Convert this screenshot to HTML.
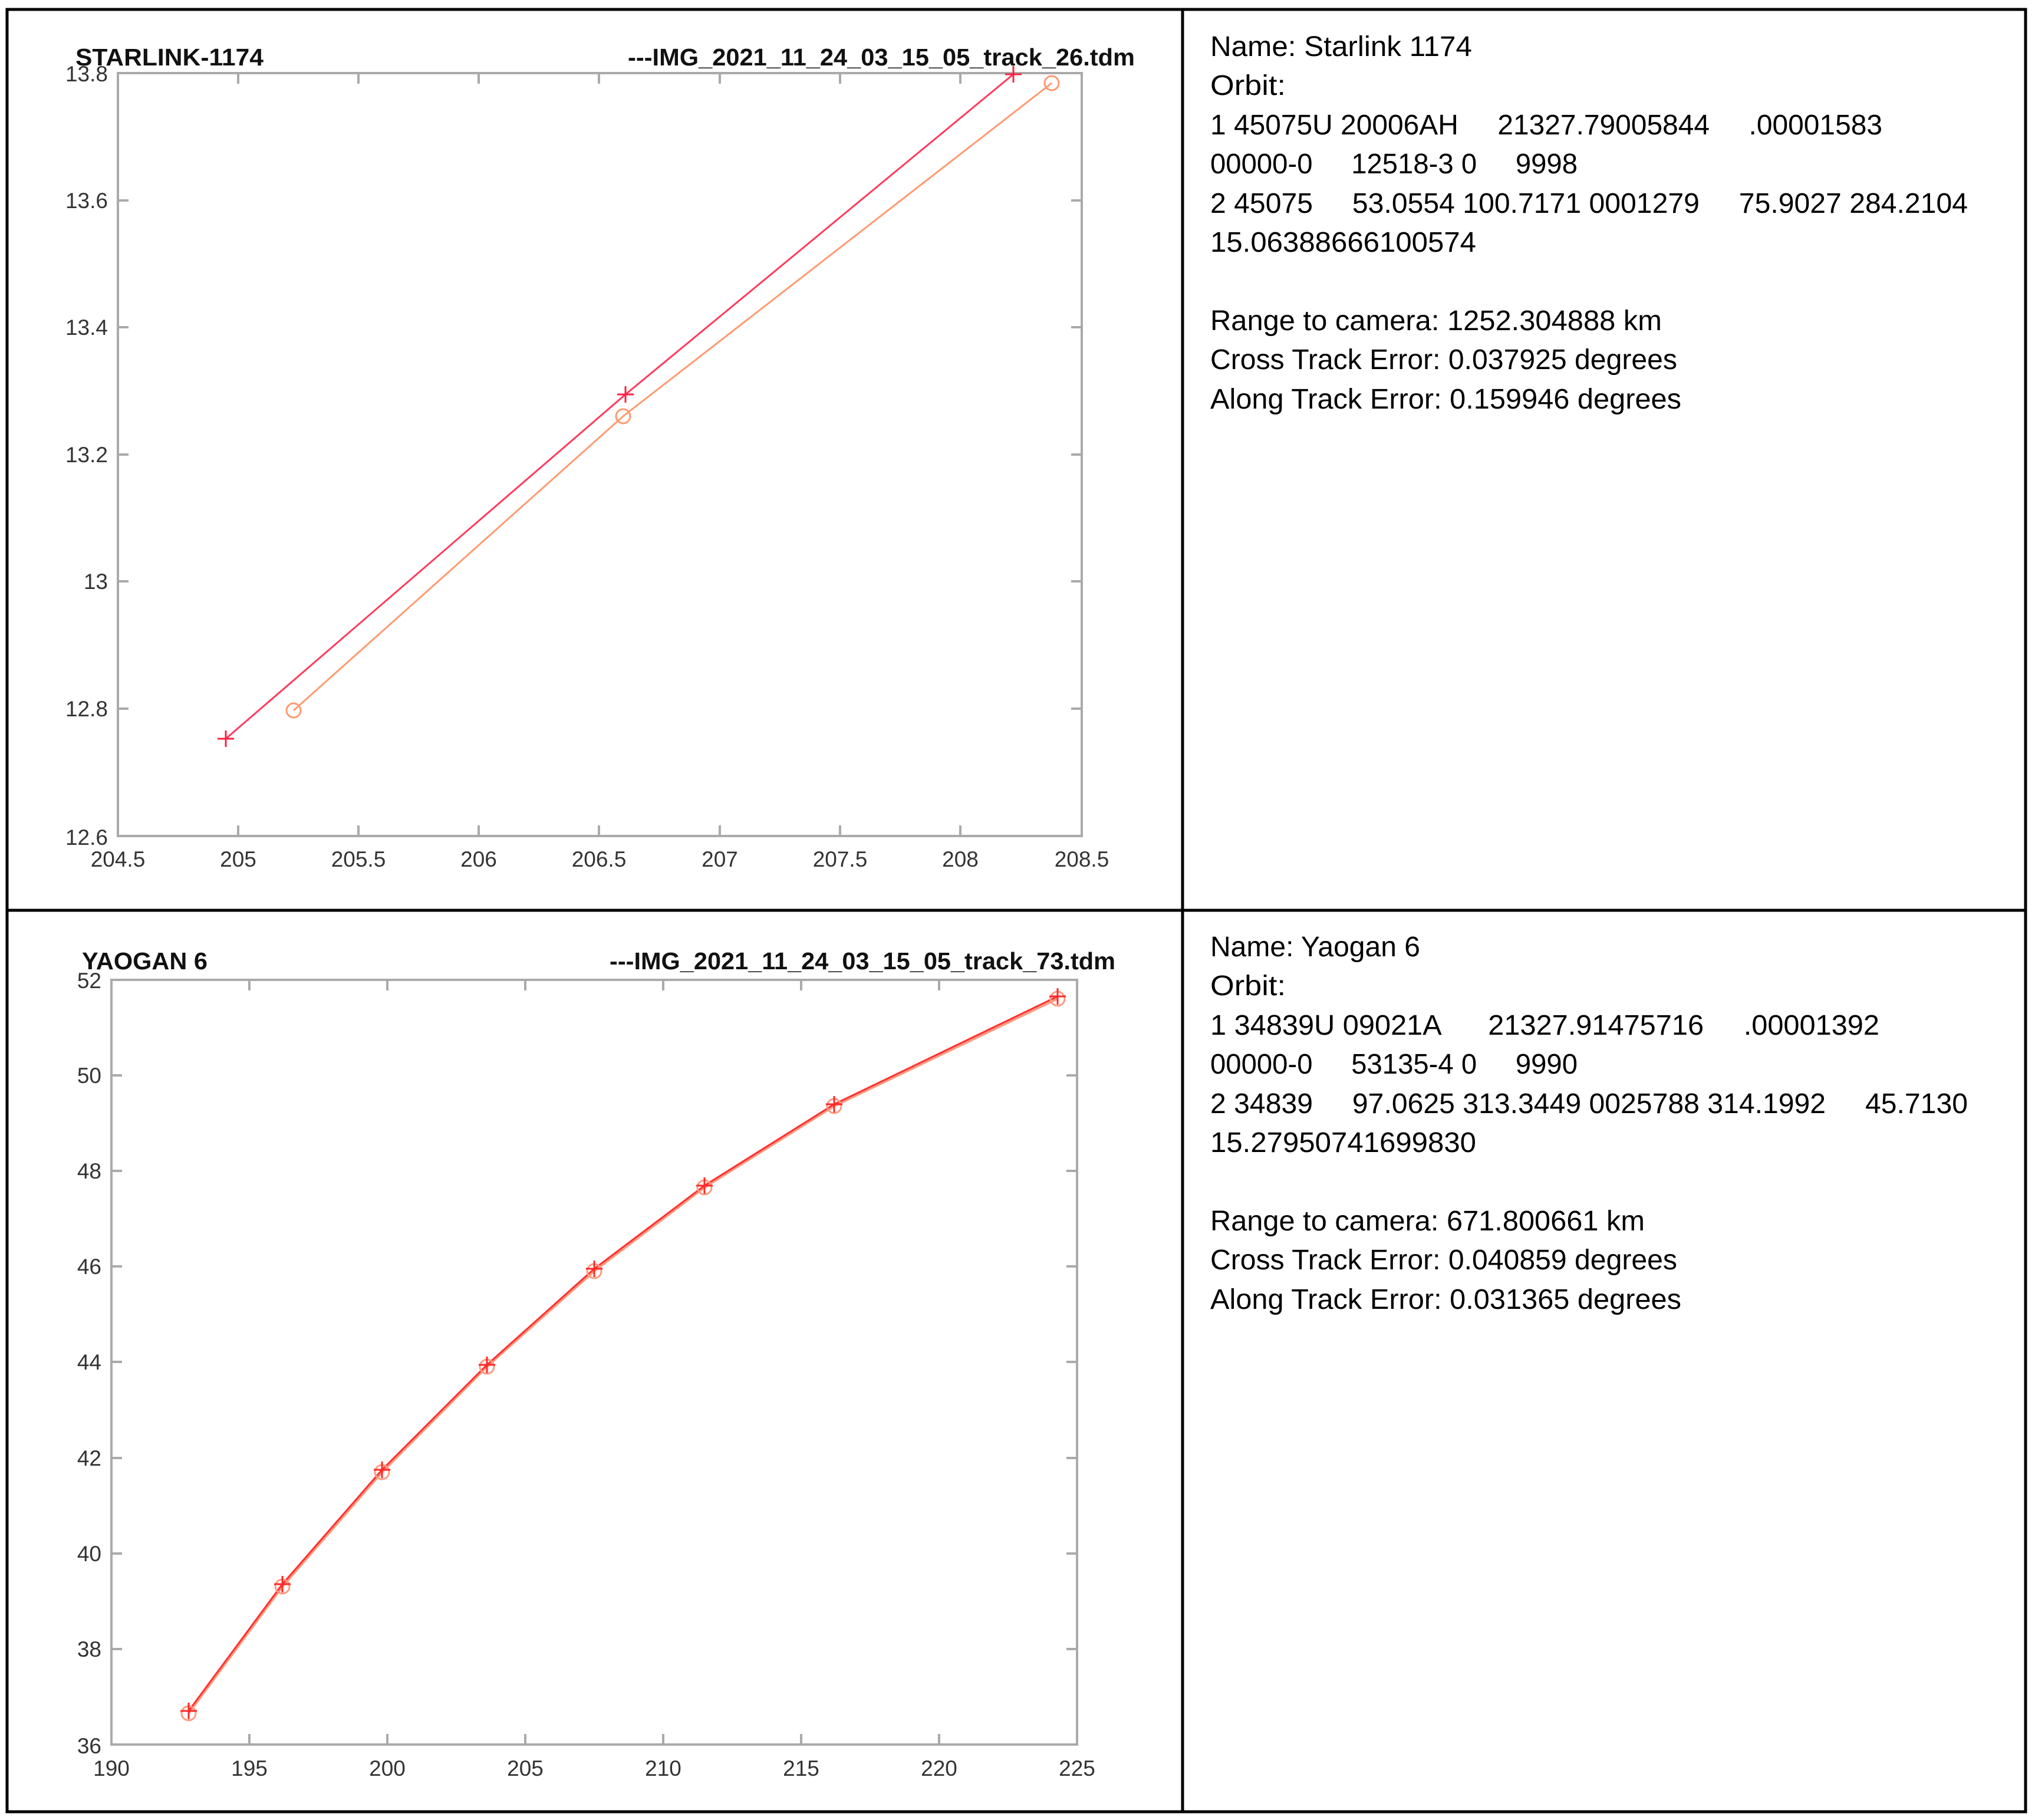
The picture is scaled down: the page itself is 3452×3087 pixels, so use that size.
<!DOCTYPE html>
<html><head><meta charset="utf-8"><style>
html,body{margin:0;padding:0;background:#fff;}
svg{display:block;}
.t{font-family:"Liberation Sans",sans-serif;font-size:48px;fill:#000;white-space:pre;}
.tk{font-family:"Liberation Sans",sans-serif;font-size:37px;fill:#333;}
.ti{font-family:"Liberation Sans",sans-serif;font-size:41px;font-weight:bold;fill:#111;}
</style></head><body>
<svg width="3452" height="3087" viewBox="0 0 3452 3087" xmlns="http://www.w3.org/2000/svg">
<rect x="0" y="0" width="3452" height="3087" fill="#fff"/>
<g stroke="#000" stroke-width="5" fill="none">
<rect x="12" y="16" width="3424" height="3057"/>
<line x1="2006" y1="16" x2="2006" y2="3073"/>
<line x1="12" y1="1544" x2="3436" y2="1544"/>
</g>

<!-- PLOT 1 -->
<g>
<text class="ti" x="128" y="111" textLength="319" lengthAdjust="spacingAndGlyphs">STARLINK-1174</text>
<text class="ti" x="1065" y="111" textLength="860" lengthAdjust="spacingAndGlyphs">---IMG_2021_11_24_03_15_05_track_26.tdm</text>
<g stroke="#aaa" stroke-width="4" fill="none">
<rect x="200" y="124" width="1635" height="1294"/>
<path d="M404 124v18M608 124v18M812 124v18M1016 124v18M1221 124v18M1425 124v18M1629 124v18
M404 1418v-18M608 1418v-18M812 1418v-18M1016 1418v-18M1221 1418v-18M1425 1418v-18M1629 1418v-18
M200 340h18M200 555h18M200 771h18M200 986h18M200 1202h18
M1835 340h-18M1835 555h-18M1835 771h-18M1835 986h-18M1835 1202h-18"/>
</g>
<g class="tk" text-anchor="end">
<text x="183" y="138">13.8</text><text x="183" y="353">13.6</text><text x="183" y="568">13.4</text>
<text x="183" y="784">13.2</text><text x="183" y="999">13</text><text x="183" y="1215">12.8</text><text x="183" y="1433">12.6</text>
</g>
<g class="tk" text-anchor="middle">
<text x="200" y="1470">204.5</text><text x="404" y="1470">205</text><text x="608" y="1470">205.5</text>
<text x="812" y="1470">206</text><text x="1016" y="1470">206.5</text><text x="1221" y="1470">207</text>
<text x="1425" y="1470">207.5</text><text x="1629" y="1470">208</text><text x="1835" y="1470">208.5</text>
</g>
<polyline points="383,1253 1061,669 1719,126" fill="none" stroke="#ff3a5c" stroke-width="3"/>
<g stroke="#ff2040" stroke-width="3">
<path d="M369 1253h28M383 1239v28M1047 669h28M1061 655v28M1705 126h28M1719 112v28"/>
</g>
<polyline points="498,1205 1057,706 1784,141" fill="none" stroke="#ff9a70" stroke-width="3"/>
<g stroke="#ff9a70" stroke-width="3" fill="none">
<circle cx="498" cy="1205" r="12"/><circle cx="1057" cy="706" r="12"/><circle cx="1784" cy="141" r="12"/>
</g>
</g>

<!-- PLOT 2 -->
<g>
<text class="ti" x="139" y="1644" textLength="213" lengthAdjust="spacingAndGlyphs">YAOGAN 6</text>
<text class="ti" x="1034" y="1644" textLength="858" lengthAdjust="spacingAndGlyphs">---IMG_2021_11_24_03_15_05_track_73.tdm</text>
<g stroke="#aaa" stroke-width="4" fill="none">
<rect x="189" y="1662" width="1638" height="1297"/>
<path d="M423 1662v18M657 1662v18M891 1662v18M1125 1662v18M1359 1662v18M1593 1662v18
M423 2959v-18M657 2959v-18M891 2959v-18M1125 2959v-18M1359 2959v-18M1593 2959v-18
M189 1824h18M189 1986h18M189 2148h18M189 2310h18M189 2473h18M189 2635h18M189 2797h18
M1827 1824h-18M1827 1986h-18M1827 2148h-18M1827 2310h-18M1827 2473h-18M1827 2635h-18M1827 2797h-18"/>
</g>
<g class="tk" text-anchor="end">
<text x="172" y="1676">52</text><text x="172" y="1837">50</text><text x="172" y="1999">48</text>
<text x="172" y="2161">46</text><text x="172" y="2323">44</text><text x="172" y="2486">42</text>
<text x="172" y="2648">40</text><text x="172" y="2810">38</text><text x="172" y="2974">36</text>
</g>
<g class="tk" text-anchor="middle">
<text x="189" y="3012">190</text><text x="423" y="3012">195</text><text x="657" y="3012">200</text>
<text x="891" y="3012">205</text><text x="1125" y="3012">210</text><text x="1359" y="3012">215</text>
<text x="1593" y="3012">220</text><text x="1827" y="3012">225</text>
</g>
<polyline points="320,2906 479,2691 648,2497 826,2318 1008,2156 1195,2014 1415,1876 1794,1694" fill="none" stroke="#ff9a80" stroke-width="4"/>
<polyline points="320,2902 479,2687 648,2493 826,2315 1008,2152 1195,2011 1415,1873 1794,1690" fill="none" stroke="#ff3030" stroke-width="3"/>
<g stroke="#ff9a80" stroke-width="3" fill="none">
<circle cx="320" cy="2906" r="12"/><circle cx="479" cy="2691" r="12"/><circle cx="648" cy="2497" r="12"/>
<circle cx="826" cy="2318" r="12"/><circle cx="1008" cy="2156" r="12"/><circle cx="1195" cy="2014" r="12"/>
<circle cx="1415" cy="1876" r="12"/><circle cx="1794" cy="1694" r="12"/>
</g>
<g stroke="#ff2828" stroke-width="3">
<path d="M306 2902h28M320 2888v28M465 2687h28M479 2673v28M634 2493h28M648 2479v28M812 2315h28M826 2301v28
M994 2152h28M1008 2138v28M1181 2011h28M1195 1997v28M1401 1873h28M1415 1859v28M1780 1690h28M1794 1676v28"/>
</g>
</g>

<!-- TEXT 1 -->
<g class="t">
<text x="2053" y="95" textLength="444" lengthAdjust="spacingAndGlyphs">Name: Starlink 1174</text>
<text x="2053" y="161" textLength="128" lengthAdjust="spacingAndGlyphs">Orbit:</text>
<text x="2053" y="228" textLength="1140" lengthAdjust="spacingAndGlyphs" xml:space="preserve">1 45075U 20006AH     21327.79005844     .00001583</text>
<text x="2053" y="294" textLength="623" lengthAdjust="spacingAndGlyphs" xml:space="preserve">00000-0     12518-3 0     9998</text>
<text x="2053" y="361" textLength="1285" lengthAdjust="spacingAndGlyphs" xml:space="preserve">2 45075     53.0554 100.7171 0001279     75.9027 284.2104</text>
<text x="2053" y="427" textLength="451" lengthAdjust="spacingAndGlyphs">15.06388666100574</text>
<text x="2053" y="560" textLength="766" lengthAdjust="spacingAndGlyphs">Range to camera: 1252.304888 km</text>
<text x="2053" y="626" textLength="792" lengthAdjust="spacingAndGlyphs">Cross Track Error: 0.037925 degrees</text>
<text x="2053" y="693" textLength="799" lengthAdjust="spacingAndGlyphs">Along Track Error: 0.159946 degrees</text>
</g>
<!-- TEXT 2 -->
<g class="t">
<text x="2053" y="1622" textLength="356" lengthAdjust="spacingAndGlyphs">Name: Yaogan 6</text>
<text x="2053" y="1688" textLength="128" lengthAdjust="spacingAndGlyphs">Orbit:</text>
<text x="2053" y="1755" textLength="1135" lengthAdjust="spacingAndGlyphs" xml:space="preserve">1 34839U 09021A      21327.91475716     .00001392</text>
<text x="2053" y="1821" textLength="623" lengthAdjust="spacingAndGlyphs" xml:space="preserve">00000-0     53135-4 0     9990</text>
<text x="2053" y="1888" textLength="1285" lengthAdjust="spacingAndGlyphs" xml:space="preserve">2 34839     97.0625 313.3449 0025788 314.1992     45.7130</text>
<text x="2053" y="1954" textLength="451" lengthAdjust="spacingAndGlyphs">15.27950741699830</text>
<text x="2053" y="2087" textLength="737" lengthAdjust="spacingAndGlyphs">Range to camera: 671.800661 km</text>
<text x="2053" y="2153" textLength="792" lengthAdjust="spacingAndGlyphs">Cross Track Error: 0.040859 degrees</text>
<text x="2053" y="2220" textLength="799" lengthAdjust="spacingAndGlyphs">Along Track Error: 0.031365 degrees</text>
</g>
</svg>
</body></html>
